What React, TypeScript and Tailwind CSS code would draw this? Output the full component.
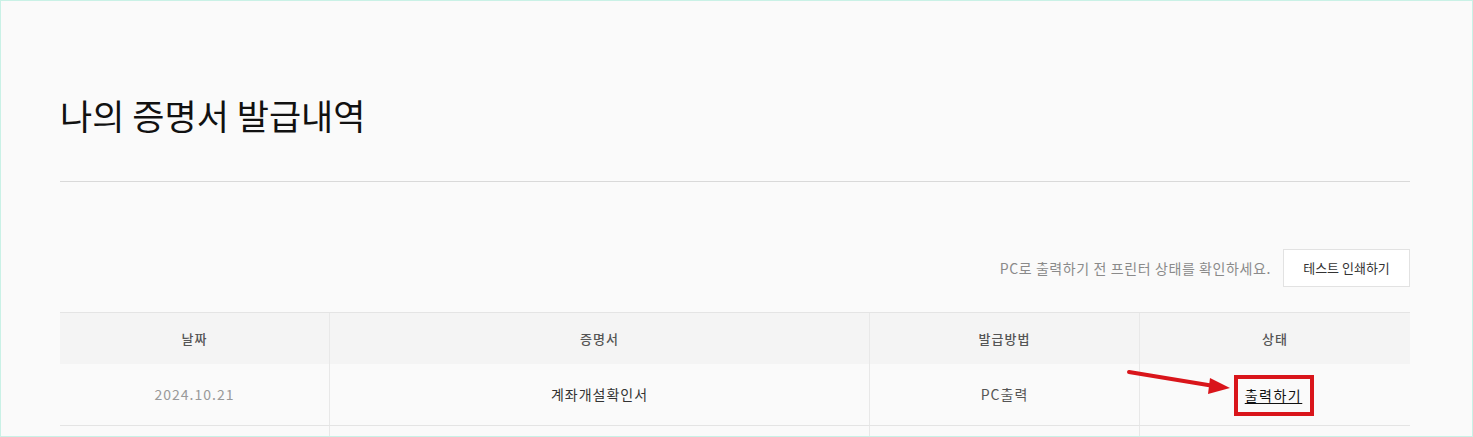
const font = { fontFamily: '"Noto Sans CJK KR", "Noto Sans", sans-serif' };

const columns = ["날짜", "증명서", "발급방법", "상태"];
const grid = "grid grid-cols-[269px_540px_270px_1fr]";

export default function App() {
  return (
    <div
      className="relative h-[437px] w-full overflow-hidden border border-[#c9f1e6] bg-[#fafafa] pl-[59px] pr-[62px]"
      style={font}
    >
      {/* 제목 */}
      <h1 className="pt-[84px] text-[35px] leading-[60px] font-normal text-[#111]">
        나의 증명서 발급내역
      </h1>
      <div className="mt-[36px] h-px bg-[#d9d9d9]" />

      {/* 안내 + 테스트 인쇄 */}
      <div className="mt-[67px] flex items-center justify-end gap-3">
        <span className="text-[14px] tracking-[0.6px] text-[#8a8a8a]">
          PC로 출력하기 전 프린터 상태를 확인하세요.
        </span>
        <button className="h-[38px] w-[127px] border border-[#e2e2e2] bg-white text-[13px] text-[#333]">
          테스트 인쇄하기
        </button>
      </div>

      {/* 발급내역 표 */}
      <div className="mt-[25px] border-t border-[#e4e4e4]">
        <div className={grid + " bg-[#f4f4f4]"}>
          {columns.map((c, i) => (
            <div
              key={c}
              className={
                "flex h-[51px] items-center justify-center text-[13px] font-medium tracking-[1px] text-[#555] " +
                (i > 0 ? "border-l border-[#e8e8e8]" : "")
              }
            >
              {c}
            </div>
          ))}
        </div>
        <div className={grid + " border-b border-[#e4e4e4] bg-[#fafafa] text-[14px] tracking-[1px]"}>
          <div className="flex h-[61px] items-center justify-center text-[#999]">2024.10.21</div>
          <div className="flex items-center justify-center border-l border-[#e8e8e8] text-[#333]">
            계좌개설확인서
          </div>
          <div className="flex items-center justify-center border-l border-[#e8e8e8] text-[#555]">
            PC출력
          </div>
          <div className="flex items-center justify-center border-l border-[#e8e8e8]">
            <span className="ml-[-3px] mt-[2px] flex h-[41px] w-[80px] items-center justify-center border-4 border-[#d9151b]">
              <a className="tracking-[1.5px] text-[#111] underline underline-offset-2">출력하기</a>
            </span>
          </div>
        </div>
        <div className={grid + " h-4"}>
          <div />
          <div className="border-l border-[#e8e8e8]" />
          <div className="border-l border-[#e8e8e8]" />
          <div className="border-l border-[#e8e8e8]" />
        </div>
      </div>

      {/* 빨간 화살표 (주석) */}
      <svg
        className="pointer-events-none absolute left-[1125px] top-[366px]"
        width="110"
        height="32"
        viewBox="0 0 110 32"
      >
        <line x1="3" y1="5" x2="88" y2="19" stroke="#d9151b" strokeWidth="4" strokeLinecap="round" />
        <polygon points="104,21 84,11 82,27" fill="#d9151b" />
      </svg>
    </div>
  );
}
